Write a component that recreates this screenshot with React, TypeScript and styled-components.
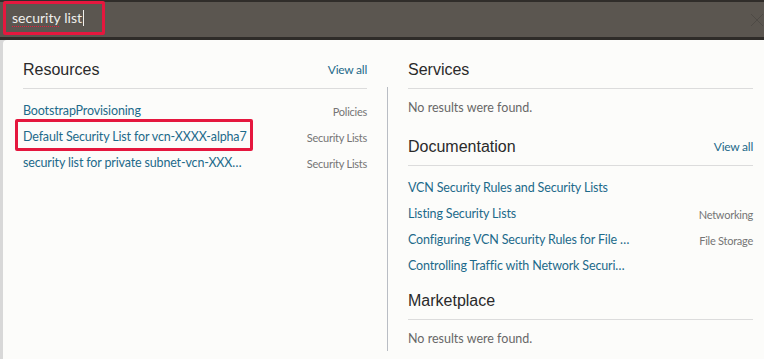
import React from "react";
import styled, { createGlobalStyle } from "styled-components";

const Global = createGlobalStyle`
  html, body { margin: 0; padding: 0; background: #d8d8d8; }
  body { font-family: Lato, "Open Sans", sans-serif; width: 764px; height: 359px; overflow: hidden; }
`;

const Page = styled.div`
  display: flex;
  flex-direction: column;
  width: 764px;
  height: 359px;
  background: #d8d8d8;
  overflow: hidden;
`;

const TopBar = styled.header`
  box-sizing: border-box;
  flex: none;
  height: 40px;
  background: #5b5650;
  border-top: 2px solid #302d2a;
  border-bottom: 3px solid #2f2c29;
  display: flex;
  align-items: flex-start;
  justify-content: space-between;
  padding-left: 3px;
`;

const SearchBox = styled.div`
  box-sizing: border-box;
  width: 102px;
  height: 34px;
  margin-top: -1px;
  border: 3px solid #e5173e;
  border-radius: 2px;
  padding-left: 6px;
  display: flex;
  align-items: center;
  font-size: 14px;
  line-height: 20px;
  color: #efefec;
  white-space: nowrap;
`;

const Misspelled = styled.span`
  text-decoration: underline dotted #e0203f;
  text-decoration-thickness: 1px;
  text-underline-offset: 3px;
`;

const Caret = styled.span`
  display: inline-block;
  width: 1px;
  height: 16px;
  margin-left: 1px;
  background: #efefec;
`;

const CloseIcon = styled.svg`
  flex: none;
  align-self: center;
  width: 14px;
  height: 14px;
`;

const Body = styled.div`
  flex: 1;
  display: flex;
  padding-left: 3px;
  min-height: 0;
`;

const Panel = styled.main`
  flex: 1;
  display: flex;
  background: #fcfcfa;
  border-top-left-radius: 4px;
  padding-left: 20px;
`;

const Column = styled.section<{ $width: number }>`
  flex: none;
  width: ${(p) => p.$width}px;
  display: flex;
  flex-direction: column;
`;

const Divider = styled.div`
  flex: none;
  width: 1px;
  margin: 47px 20px 8px;
  background: #b9bdc4;
`;

const SectionHeader = styled.div<{ $top: number }>`
  display: flex;
  align-items: center;
  justify-content: space-between;
  padding: ${(p) => p.$top}px 0 8px;
  border-bottom: 1px solid #dcdcdc;
`;

const Title = styled.h2`
  margin: 0;
  font-family: "Liberation Sans", Arial, sans-serif;
  font-size: 16px;
  font-weight: normal;
  line-height: 20px;
  color: #2a2a2a;
`;

const ViewAll = styled.a`
  font-size: 12px;
  line-height: 16px;
  letter-spacing: -0.25px;
  color: #1e6a8a;
  text-decoration: none;
`;

const List = styled.div`
  display: flex;
  flex-direction: column;
  padding-top: 9px;
`;

const Row = styled.div`
  display: flex;
  align-items: center;
  justify-content: space-between;
  height: 26px;
`;

const ResultLink = styled.a<{ $highlight?: boolean }>`
  position: relative;
  font-size: 12.5px;
  letter-spacing: -0.15px;
  line-height: 26px;
  color: #1d6a8a;
  text-decoration: none;
  white-space: nowrap;
  ${(p) =>
    p.$highlight &&
    `
    &::after {
      content: "";
      position: absolute;
      top: -5px;
      bottom: -1px;
      left: -8px;
      right: -6px;
      border: 3px solid #e5173e;
      border-radius: 2px;
    }
  `}
`;

const Tag = styled.span`
  font-size: 11px;
  letter-spacing: -0.25px;
  color: #757575;
  white-space: nowrap;
`;

const NoResults = styled.div`
  padding-top: 10px;
  font-size: 12.5px;
  line-height: 18px;
  color: #686868;
`;

type Item = { title: string; tag?: string; highlight?: boolean };

const resources: Item[] = [
  { title: "BootstrapProvisioning", tag: "Policies" },
  { title: "Default Security List for vcn-XXXX-alpha7", tag: "Security Lists", highlight: true },
  { title: "security list for private subnet-vcn-XXX…", tag: "Security Lists" },
];

const docs: Item[] = [
  { title: "VCN Security Rules and Security Lists" },
  { title: "Listing Security Lists", tag: "Networking" },
  { title: "Configuring VCN Security Rules for File …", tag: "File Storage" },
  { title: "Controlling Traffic with Network Securi…" },
];

const Results = ({ items }: { items: Item[] }) => (
  <List>
    {items.map((it) => (
      <Row key={it.title}>
        <ResultLink href="#" $highlight={it.highlight}>
          {it.title}
        </ResultLink>
        {it.tag && <Tag>{it.tag}</Tag>}
      </Row>
    ))}
  </List>
);

export default function App() {
  return (
    <>
      <Global />
      <Page>
        <TopBar>
          <SearchBox>
            <Misspelled>security</Misspelled>&nbsp;list
            <Caret />
          </SearchBox>
          <CloseIcon viewBox="0 0 14 14">
            <path d="M1 1 L13 13 M13 1 L1 13" stroke="#4e4a45" strokeWidth="1" fill="none" />
          </CloseIcon>
        </TopBar>
        <Body>
          <Panel>
            <Column $width={344}>
              <SectionHeader $top={20}>
                <Title>Resources</Title>
                <ViewAll href="#">View all</ViewAll>
              </SectionHeader>
              <Results items={resources} />
            </Column>
            <Divider />
            <Column $width={345}>
              <SectionHeader $top={20}>
                <Title>Services</Title>
              </SectionHeader>
              <NoResults>No results were found.</NoResults>
              <SectionHeader $top={20}>
                <Title>Documentation</Title>
                <ViewAll href="#">View all</ViewAll>
              </SectionHeader>
              <Results items={docs} />
              <SectionHeader $top={12}>
                <Title>Marketplace</Title>
              </SectionHeader>
              <NoResults>No results were found.</NoResults>
            </Column>
          </Panel>
        </Body>
      </Page>
    </>
  );
}
